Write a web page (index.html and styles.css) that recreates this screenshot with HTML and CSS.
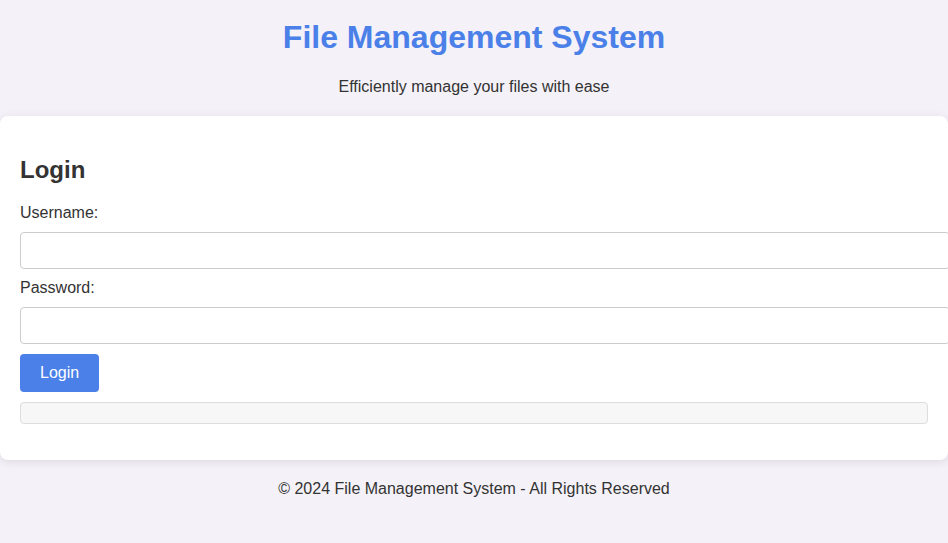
FILE: index.html
```html
<!DOCTYPE html>
<html lang="en">
<head>
<meta charset="utf-8">
<title>File Management System</title>
<link rel="stylesheet" href="styles.css">
</head>
<body>
<header class="site-header">
  <h1 class="site-title">File Management System</h1>
  <p class="site-tagline">Efficiently manage your files with ease</p>
</header>
<main class="card">
  <h2 class="card-title">Login</h2>
  <form class="login-form">
    <label class="field-label" for="username">Username:</label>
    <input class="field-input" type="text" id="username">
    <label class="field-label" for="password">Password:</label>
    <input class="field-input" type="password" id="password">
    <button class="btn" type="button">Login</button>
  </form>
  <div class="message"></div>
</main>
<footer class="site-footer">&copy; 2024 File Management System - All Rights Reserved</footer>
</body>
</html>
```
FILE: styles.css
```css
html, body {
  margin: 0;
  padding: 0;
}
body {
  background: #f4f2f8;
  font-family: "Liberation Sans", Arial, sans-serif;
  color: #333;
  font-size: 16px;
  overflow: hidden;
}
.site-header {
  text-align: center;
  padding: 19px 0 20px;
}
.site-title {
  margin: 0 0 22px;
  font-size: 32px;
  font-weight: bold;
  color: #4a80e8;
}
.site-tagline {
  margin: 0;
  font-size: 16px;
}
.card {
  display: block;
  background: #fff;
  border-radius: 8px;
  box-shadow: 0 2px 10px rgba(0, 0, 0, 0.1);
  padding: 20px 20px 36px;
}
.card-title {
  margin: 20px 0;
  font-size: 24px;
  font-weight: bold;
}
.login-form {
  display: block;
}
.field-label {
  display: block;
  margin-bottom: 10px;
}
.field-input {
  display: block;
  width: 100%;
  padding: 8px 10px;
  margin: 0 0 10px;
  font-family: "Liberation Sans", Arial, sans-serif;
  font-size: 16px;
  line-height: 19px;
  border: 1px solid #ccc;
  border-radius: 4px;
  background: #fff;
}
.btn {
  display: inline-block;
  padding: 10px 20px;
  font-family: "Liberation Sans", Arial, sans-serif;
  font-size: 16px;
  line-height: 18px;
  color: #fff;
  background: #4a80e8;
  border: none;
  border-radius: 4px;
  vertical-align: top;
}
.message {
  margin-top: 10px;
  padding: 10px;
  background: #f7f7f7;
  border: 1px solid #ddd;
  border-radius: 4px;
}
.site-footer {
  text-align: center;
  padding: 20px;
}
```
